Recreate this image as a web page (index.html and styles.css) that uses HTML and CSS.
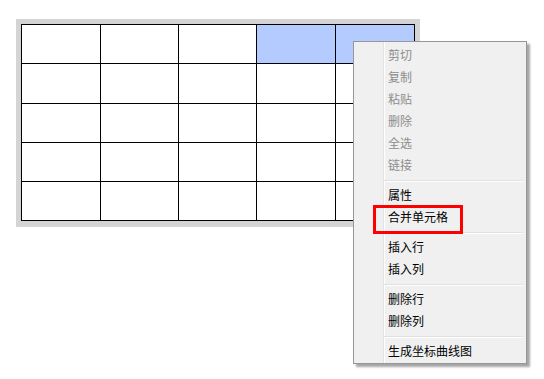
FILE: index.html
```html
<!DOCTYPE html>
<html lang="zh">
<head>
    <meta charset="UTF-8">
    <title>表格右键菜单</title>
    <link rel="stylesheet" href="styles.css">
</head>
<body>

    <div class="sheet">
        <div class="grid">
            <div class="cell"></div><div class="cell"></div><div class="cell"></div><div class="cell selected"></div><div class="cell selected"></div>
            <div class="cell"></div><div class="cell"></div><div class="cell"></div><div class="cell"></div><div class="cell"></div>
            <div class="cell"></div><div class="cell"></div><div class="cell"></div><div class="cell"></div><div class="cell"></div>
            <div class="cell"></div><div class="cell"></div><div class="cell"></div><div class="cell"></div><div class="cell"></div>
            <div class="cell"></div><div class="cell"></div><div class="cell"></div><div class="cell"></div><div class="cell"></div>
        </div>
    </div>

    <!-- 右键菜单 -->
    <div class="context-menu">
        <div class="menu-item disabled">剪切</div>
        <div class="menu-item disabled">复制</div>
        <div class="menu-item disabled">粘贴</div>
        <div class="menu-item disabled">删除</div>
        <div class="menu-item disabled">全选</div>
        <div class="menu-item disabled">链接</div>
        <div class="separator"></div>
        <div class="menu-item">属性</div>
        <div class="menu-item">合并单元格</div>
        <div class="separator"></div>
        <div class="menu-item">插入行</div>
        <div class="menu-item">插入列</div>
        <div class="separator"></div>
        <div class="menu-item">删除行</div>
        <div class="menu-item">删除列</div>
        <div class="separator"></div>
        <div class="menu-item">生成坐标曲线图</div>
        <div class="highlight-box"></div>
    </div>

</body>
</html>
```

FILE: styles.css
```css
body {
    margin: 0;
    background-color: #fff;
    font-family: "Noto Sans CJK SC", "Noto Sans", sans-serif;
    font-size: 12px;
    color: #000;
}

.sheet {
    display: inline-block;
    margin: 19px 0 0 16px;
    padding: 5px 5px 6px 5px;
    background-color: #d4d4d4;
}

.grid {
    display: grid;
    grid-template-columns: 78px 77px 77px 78px 78px;
    grid-template-rows: 38px 39px 38px 38px 38px;
    gap: 1px;
    border: 1px solid #000;
    background-color: #000;
}

.cell {
    background-color: #fff;
}

.cell.selected {
    background-color: #b3cbff;
}

.context-menu {
    position: absolute;
    left: 353px;
    top: 41px;
    width: 172px;
    padding: 2px 0 1px 0;
    background-color: #f0f0f0;
    border: 1px solid #979797;
    box-shadow: 3px 3px 2px rgba(0, 0, 0, 0.35);
    background-image: linear-gradient(to right, transparent 29px, #e2e3e3 29px, #e2e3e3 30px, #fff 30px, #fff 31px, transparent 31px);
}

.menu-item {
    height: 22px;
    line-height: 22px;
    padding-left: 34px;
    white-space: nowrap;
}

.menu-item.disabled {
    color: #8d8d8d;
}

.separator {
    height: 1px;
    margin: 4px 3px 2px 30px;
    background-color: #e0e0e0;
    border-bottom: 1px solid #fff;
}

.highlight-box {
    position: absolute;
    left: 19px;
    top: 163px;
    width: 84px;
    height: 23px;
    border: 3px solid #f00;
}
```
